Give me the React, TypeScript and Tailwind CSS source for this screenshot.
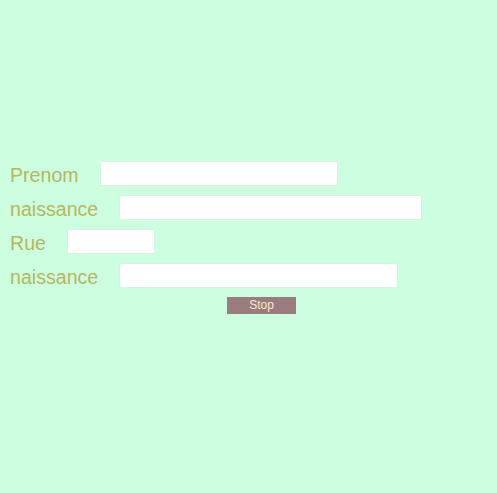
const rows = [
  { label: "Prenom", w: "w-[238px]" },
  { label: "naissance", w: "w-[303px]" },
  { label: "Rue", w: "w-[88px]" },
  { label: "naissance", w: "w-[279px]" },
];

export default function App() {
  return (
    <div className="w-[497px] h-[493px] bg-[#ccffe0] font-['Liberation_Sans',Arial,sans-serif] pt-[161px] pl-[10px]">
      <div className="flex flex-col gap-[9px]">
        {rows.map((r, i) => (
          <div key={i} className="flex items-center h-[25px]">
            <span className="text-[19.6px] text-[#b8b55c] leading-none mr-[21px] mt-[5px]">{r.label}</span>
            <input
              type="text"
              className={`${r.w} h-[25px] bg-white border border-[#d6f3df] rounded-[2px] outline-none`}
            />
          </div>
        ))}
      </div>
      <div className="flex mt-[9px] pl-[217px]">
        <button className="block w-[69px] h-[17px] bg-[#9a7c7e] text-[#f6ebc6] text-[12px] leading-[17px]">
          Stop
        </button>
      </div>
    </div>
  );
}
